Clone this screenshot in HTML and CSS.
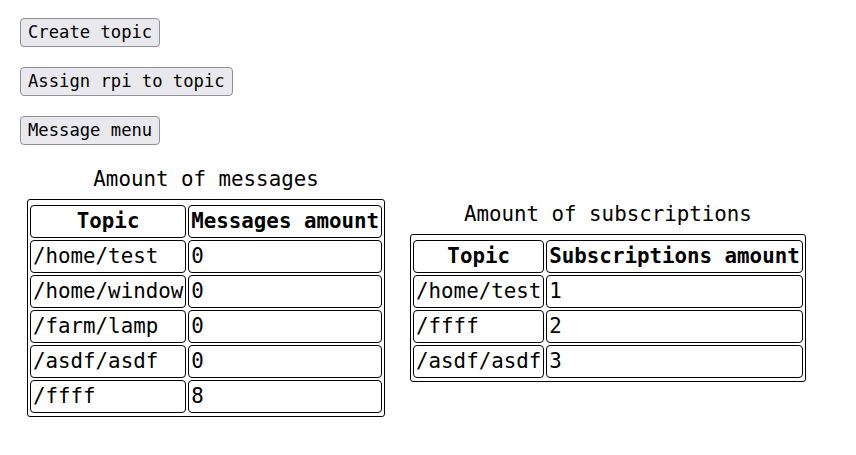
FILE: index.html
```html
<!DOCTYPE html>
<html>
<head>
<meta charset="utf-8">
<link rel="stylesheet" href="styles.css">
</head>
<body>
<div class="page">
  <div class="actions">
    <button class="btn">Create topic</button>
    <button class="btn">Assign rpi to topic</button>
    <button class="btn">Message menu</button>
  </div>
  <div class="tables">
    <table class="stats stats-left">
      <caption>Amount of messages</caption>
      <tr><th>Topic</th><th>Messages amount</th></tr>
      <tr><td>/home/test</td><td>0</td></tr>
      <tr><td>/home/window</td><td>0</td></tr>
      <tr><td>/farm/lamp</td><td>0</td></tr>
      <tr><td>/asdf/asdf</td><td>0</td></tr>
      <tr><td>/ffff</td><td>8</td></tr>
    </table>
    <table class="stats">
      <caption>Amount of subscriptions</caption>
      <tr><th>Topic</th><th>Subscriptions amount</th></tr>
      <tr><td>/home/test</td><td>1</td></tr>
      <tr><td>/ffff</td><td>2</td></tr>
      <tr><td>/asdf/asdf</td><td>3</td></tr>
    </table>
  </div>
</div>
</body>
</html>
```

FILE: styles.css
```css
html, body {
  margin: 0;
  padding: 0;
  background: #ffffff;
}
body {
  font-family: "DejaVu Sans Mono", "Liberation Mono", monospace;
  color: #000000;
}
.page {
  padding: 18px 20px 0 20px;
}
.actions {
  display: flex;
  flex-direction: column;
  align-items: flex-start;
  gap: 20px;
}
.btn {
  font-family: "DejaVu Sans Mono", "Liberation Mono", monospace;
  font-size: 17.2px;
  line-height: 21px;
  padding: 3px 7px;
  margin: 0;
  background: #e9e9ed;
  border: 1px solid #8f8f9d;
  border-radius: 4px;
  color: #000;
}
.tables {
  display: flex;
  align-items: center;
  gap: 25px;
  margin-top: 20px;
  padding-left: 7px;
}
.stats {
  font-size: 20.8px;
  border: 1px solid #000;
  border-radius: 3px;
  border-collapse: separate;
  border-spacing: 2px;
  padding: 3px 0 1px 0;
}
.stats caption {
  line-height: 29px;
  text-align: center;
  padding-bottom: 5px;
}
.stats th, .stats td {
  border: 1px solid #000;
  border-radius: 4px;
  padding: 1px 2px;
  line-height: 29px;
  white-space: nowrap;
}
.stats th {
  font-weight: bold;
  text-align: center;
}
.stats td {
  text-align: left;
}
```
